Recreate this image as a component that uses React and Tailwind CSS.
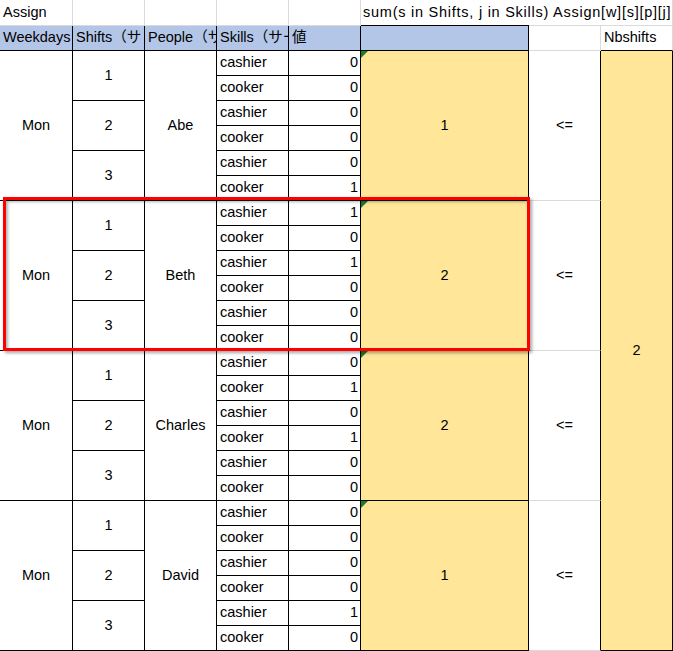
import React from "react";

const groups = [
  { name: "Abe", vals: [0, 0, 0, 0, 0, 1], sum: 1 },
  { name: "Beth", vals: [1, 0, 1, 0, 0, 0], sum: 2 },
  { name: "Charles", vals: [0, 1, 0, 1, 0, 0], sum: 2 },
  { name: "David", vals: [0, 0, 0, 0, 1, 0], sum: 1 },
];

const skills = ["cashier", "cooker", "cashier", "cooker", "cashier", "cooker"];

const cell = "flex items-center whitespace-nowrap";
const black = "border-r border-b border-black";
const gray = "border-r border-b border-[#dadada]";

function Corner() {
  // little green comment/error marker in the cell corner
  return (
    <svg className="absolute left-0 top-0" width="7" height="7" viewBox="0 0 7 7">
      <polygon points="0,0 7,0 0,7" fill="#1f7a2a" />
    </svg>
  );
}

function Group({ g, first }) {
  const rows = [];
  g.vals.forEach((v, i) => {
    if (i === 0) {
      rows.push(
        <div key="day" className={`${cell} ${black} row-span-6 justify-center`}>Mon</div>
      );
    }
    if (i % 2 === 0) {
      rows.push(
        <div key={`s${i}`} className={`${cell} ${black} row-span-2 justify-center`}>
          {i / 2 + 1}
        </div>
      );
    }
    if (i === 0) {
      rows.push(
        <div key="name" className={`${cell} ${black} row-span-6 justify-center`}>{g.name}</div>
      );
    }
    rows.push(
      <div key={`k${i}`} className={`${cell} ${black} pl-[3px]`}>{skills[i]}</div>
    );
    rows.push(
      <div key={`v${i}`} className={`${cell} ${black} justify-end pr-[2px]`}>{v}</div>
    );
    if (i === 0) {
      rows.push(
        <div key="sum" className={`${cell} ${black} relative row-span-6 justify-center bg-[#ffe699]`}>
          <Corner />
          {g.sum}
        </div>
      );
      rows.push(
        <div key="le" className={`${cell} row-span-6 justify-center border-r border-b border-r-black border-b-[#dadada]`}>
          &lt;=
        </div>
      );
      if (first) {
        rows.push(
          <div key="nb" className={`${cell} ${black} row-span-24 justify-center bg-[#ffe699]`}>2</div>
        );
      }
    }
  });
  return rows;
}

export default function App() {
  return (
    <div className="relative w-[673px] h-[651px] overflow-hidden bg-white text-black text-[14.5px] font-['Liberation_Sans','Noto_Sans_CJK_JP',sans-serif]">
      <div className="grid grid-cols-[73px_72px_72px_72px_72px_168px_72px_72px] grid-rows-[26px_repeat(25,25px)]">
        {/* Row 1 */}
        <div className={`${cell} ${gray} pl-[3px]`}>Assign</div>
        <div className={gray} />
        <div className={gray} />
        <div className={gray} />
        <div className={gray} />
        <div className={`${cell} border-b border-black pl-[2px] tracking-[0.75px]`}>
          sum(s in Shifts, j in Skills) Assign[w][s][p][j]
        </div>
        <div className="border-b border-[#dadada]" />
        <div className={gray} />

        {/* Header row */}
        <div className={`${cell} ${black} overflow-hidden bg-[#b4c6e7] pl-[3px]`}>Weekdays</div>
        <div className={`${cell} ${black} overflow-hidden bg-[#b4c6e7] pl-[3px]`}>Shifts（サ</div>
        <div className={`${cell} ${black} overflow-hidden bg-[#b4c6e7] pl-[3px]`}>People（サ</div>
        <div className={`${cell} ${black} overflow-hidden bg-[#b4c6e7] pl-[3px]`}>Skills（サー</div>
        <div className={`${cell} ${black} overflow-hidden bg-[#b4c6e7] pl-[3px]`}>値</div>
        <div className={`${black} bg-[#b4c6e7]`} />
        <div className={gray} />
        <div className={`${cell} border-r border-b border-r-[#dadada] border-b-black pl-[3px]`}>Nbshifts</div>

        {groups.map((g, idx) => (
          <Group key={g.name} g={g} first={idx === 0} />
        ))}
      </div>

      {/* highlight annotation */}
      <div className="pointer-events-none absolute left-[3px] top-[197px] h-[154px] w-[527px] border-[3px] border-[#ff0000] shadow-[2px_2px_3px_rgba(0,0,0,0.35),inset_2px_2px_3px_rgba(0,0,0,0.3)]" />
    </div>
  );
}
